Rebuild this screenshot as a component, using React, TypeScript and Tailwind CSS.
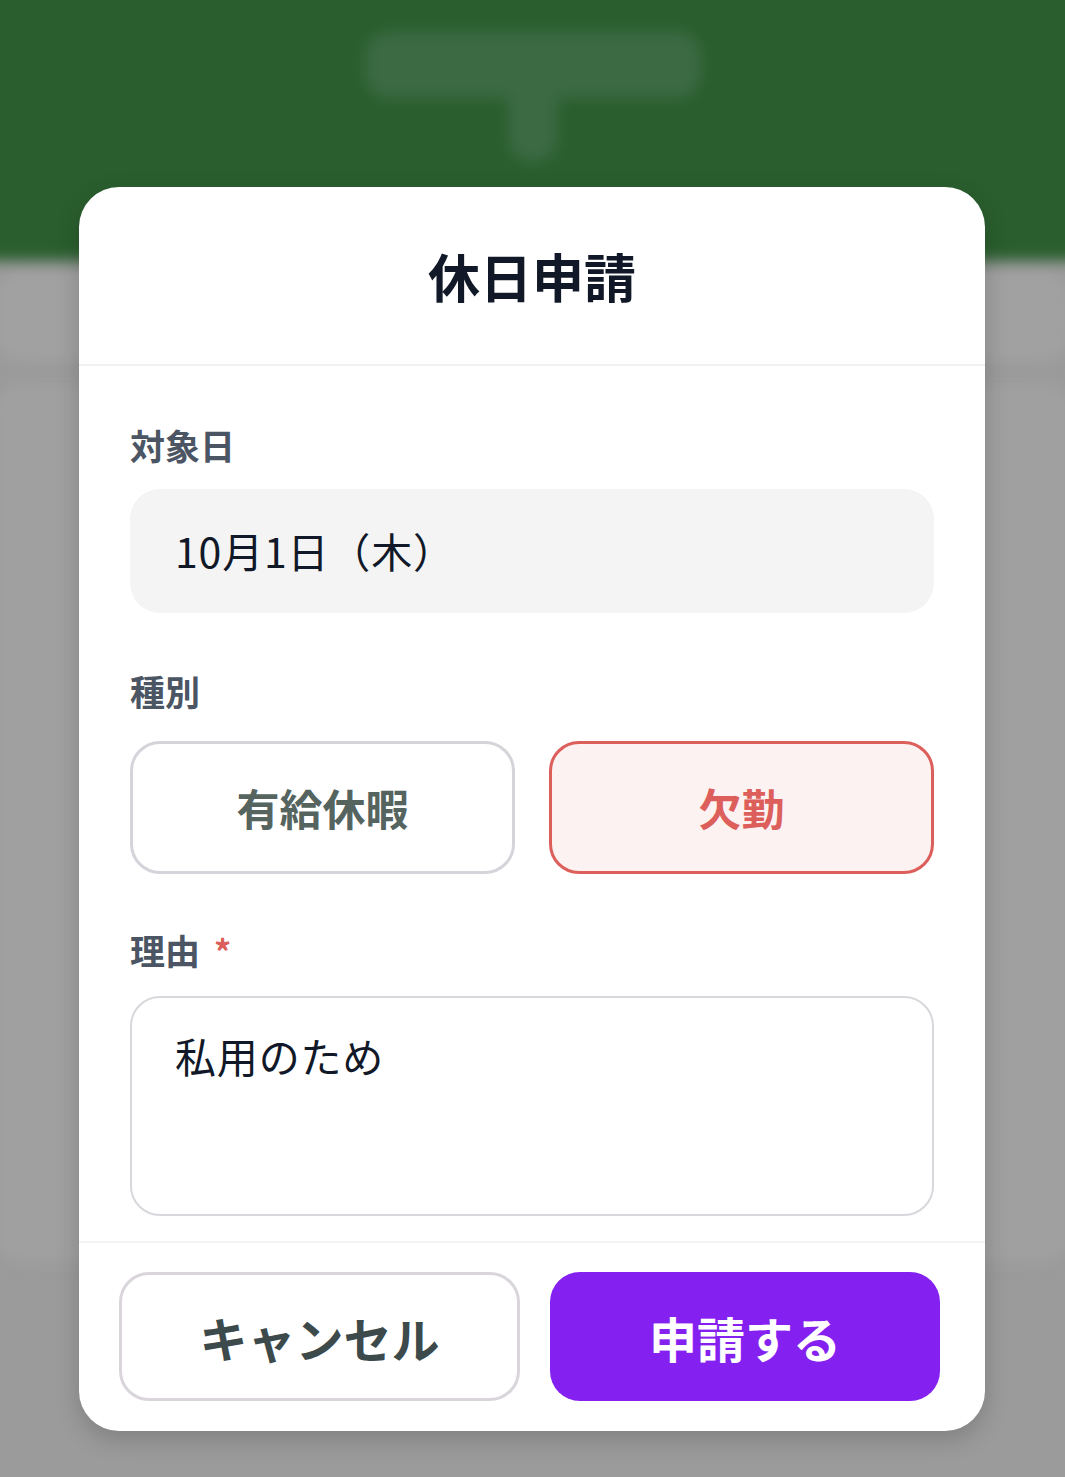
import { useState } from "react";

const jp = "font-['Noto_Sans_CJK_JP','Noto_Sans',sans-serif]";

type LeaveType = "paid" | "absence";

function Backdrop() {
  // ぼかした背景画面（モーダルの後ろ）
  return (
    <div className="-mx-6 -mt-6 blur-[7px]">
      <div className="flex h-[285px] justify-center bg-[#2a5e2e] pt-[56px]">
        <div className="flex flex-col items-center">
          <div className="h-[66px] w-[336px] rounded-[24px] bg-[#3b6a43]" />
          <div className="h-[64px] w-[50px] rounded-b-[26px] bg-[#3b6a43]" />
        </div>
      </div>
      <div className="flex flex-col gap-[22px] px-[18px] pt-[10px]">
        <div className="h-[90px] rounded-[30px] bg-[#a1a1a1]" />
        <div className="h-[880px] rounded-[30px] bg-[#a0a0a0]" />
      </div>
    </div>
  );
}

const typeOn =
  "h-[133px] rounded-[30px] border-[3px] border-[#dc5f5c] bg-[#fdf2f2] text-[43px] font-bold text-[#dc5f5c]";
const typeOff =
  "h-[133px] rounded-[30px] border-[3px] border-[#d6d4da] bg-white text-[43px] font-bold text-[#55645f]";

export default function App() {
  const [leaveType, setLeaveType] = useState<LeaveType>("absence");
  const [reason, setReason] = useState("私用のため");

  return (
    <div className={`relative min-h-[1477px] w-full overflow-hidden bg-[#9b9b9b] ${jp}`}>
      <Backdrop />

      <div className="absolute left-[79px] top-[187px] w-[906px] overflow-hidden rounded-[40px] bg-white shadow-[0_8px_24px_rgba(0,0,0,0.18)]">
        {/* ヘッダー */}
        <div className="flex h-[179px] items-center justify-center border-b-2 border-[#f1f1f3]">
          <h2 className="text-[52px] font-bold leading-none text-[#111827]">休日申請</h2>
        </div>

        {/* 本文 */}
        <div className="px-[51px] pb-[25px] pt-[55px]">
          <label className="block text-[35px] font-bold leading-[48px] text-[#4b5563]">対象日</label>
          <div className="mt-[20px] flex h-[124px] items-center rounded-[30px] bg-[#f4f4f5] px-[45px] text-[41px] tracking-[0.02em] text-[#111827]">
            10月1日（木）
          </div>

          <label className="mt-[54px] block text-[35px] font-bold leading-[48px] text-[#4b5563]">種別</label>
          <div className="mt-[26px] grid grid-cols-2 gap-[34px]">
            <button onClick={() => setLeaveType("paid")} className={leaveType === "paid" ? typeOn : typeOff}>
              有給休暇
            </button>
            <button onClick={() => setLeaveType("absence")} className={leaveType === "absence" ? typeOn : typeOff}>
              欠勤
            </button>
          </div>

          <label className="mt-[52px] block text-[35px] font-bold leading-[48px] text-[#4b5563]">
            理由<span className="ml-[14px] text-[34px] text-[#dc5f5c]">*</span>
          </label>
          <textarea
            value={reason}
            onChange={(e) => setReason(e.target.value)}
            className="mt-[21px] block h-[220px] w-full resize-none rounded-[30px] border-2 border-[#d9d6dc] px-[43px] pt-[29px] text-[41px] leading-[57px] tracking-[0.02em] text-[#111827] outline-none"
          />
        </div>

        {/* フッター */}
        <div className="flex gap-[30px] border-t-2 border-[#f3f3f5] pb-[30px] pl-[40px] pr-[45px] pt-[29px]">
          <button className="h-[129px] w-[401px] rounded-[30px] border-[3px] border-[#d9d5db] bg-white text-[48px] font-bold text-[#3d4a4c]">
            キャンセル
          </button>
          <button className="h-[129px] w-[390px] rounded-[30px] bg-[#8420f0] text-[48px] font-bold text-white">
            申請する
          </button>
        </div>
      </div>
    </div>
  );
}
